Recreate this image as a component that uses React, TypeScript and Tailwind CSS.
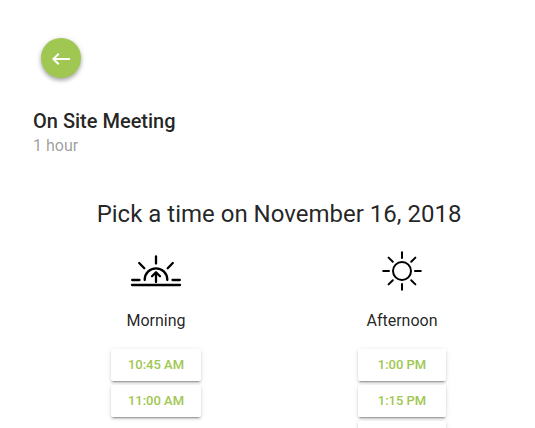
import type { ReactNode } from 'react';

type Period = {
  name: string;
  icon: ReactNode;
  times: string[];
};

function SunriseIcon() {
  return (
    <svg
      width="52"
      height="40"
      viewBox="0 0 52 40"
      fill="none"
      stroke="black"
      strokeWidth="2.3"
      strokeLinecap="round"
      strokeLinejoin="round"
      aria-hidden="true"
    >
      <path d="M2 34H50" />
      <path d="M2.2 29H9.5M42.5 29H49.8" />
      <path d="M14.7 29V28.6A11.3 11.3 0 0 1 37.3 28.6V29" />
      <path d="M26 5.5V12.5" />
      <path d="M9.2 12L14.3 17.2M42.8 12L37.7 17.2" />
      <path d="M26 31V21.5M22 25.2L26 21.2L30 25.2" />
    </svg>
  );
}

function SunIcon() {
  return (
    <svg
      width="40"
      height="40"
      viewBox="0 0 40 40"
      fill="none"
      stroke="black"
      strokeWidth="2"
      strokeLinecap="round"
      aria-hidden="true"
    >
      <circle cx="20" cy="20" r="9" />
      <path d="M20 1.2V7M20 33V38.8M1.2 20H7M33 20H38.8" />
      <path d="M6.6 6.6L10.8 10.8M29.2 29.2L33.4 33.4M33.4 6.6L29.2 10.8M10.8 29.2L6.6 33.4" />
    </svg>
  );
}

const periods: Period[] = [
  { name: 'Morning', icon: <SunriseIcon />, times: ['10:45 AM', '11:00 AM'] },
  { name: 'Afternoon', icon: <SunIcon />, times: ['1:00 PM', '1:15 PM', '1:30 PM'] },
];

const raised =
  'shadow-[0_3px_1px_-2px_rgba(0,0,0,0.2),0_2px_2px_0_rgba(0,0,0,0.14),0_1px_5px_0_rgba(0,0,0,0.12)]';

export default function App() {
  return (
    <main className="min-h-screen bg-white pt-[38px] pr-[10px] pb-8 pl-[33px] font-[Roboto,sans-serif] text-black/87">
      <button
        type="button"
        aria-label="Back"
        className="ml-2 flex size-10 items-center justify-center rounded-full bg-[#9fc751] text-white shadow-[0_3px_5px_-1px_rgba(0,0,0,0.2),0_2px_4px_0_rgba(0,0,0,0.14),0_1px_6px_0_rgba(0,0,0,0.12)]"
      >
        <svg width="24" height="24" viewBox="0 0 24 24" fill="currentColor" aria-hidden="true">
          <path d="M21 12H6.83l3.58-3.59L9 7l-6 6 6 6 1.41-1.41L6.83 14H21z" />
        </svg>
      </button>

      {/* Event summary */}
      <header className="mt-[31px]">
        <h1 className="text-xl leading-6 font-medium">On Site Meeting</h1>
        <p className="text-base leading-[26px] text-black/40">1 hour</p>
      </header>

      {/* Time picker */}
      <section className="mt-[39px]">
        <h2 className="text-center text-2xl leading-8">Pick a time on November 16, 2018</h2>
        <div className="mt-[21px] grid grid-cols-2">
          {periods.map((period) => (
            <div key={period.name} className="flex flex-col items-center">
              {period.icon}
              <h3 className="mt-[18px] text-base leading-6">{period.name}</h3>
              <ul className="mt-4 flex flex-col gap-1">
                {period.times.map((time) => (
                  <li key={time}>
                    <button
                      type="button"
                      className={`h-8 w-full min-w-[88px] rounded-xs bg-white px-[17px] text-[13px] font-medium text-[#9fc751] ${raised}`}
                    >
                      {time}
                    </button>
                  </li>
                ))}
              </ul>
            </div>
          ))}
        </div>
      </section>
    </main>
  );
}
